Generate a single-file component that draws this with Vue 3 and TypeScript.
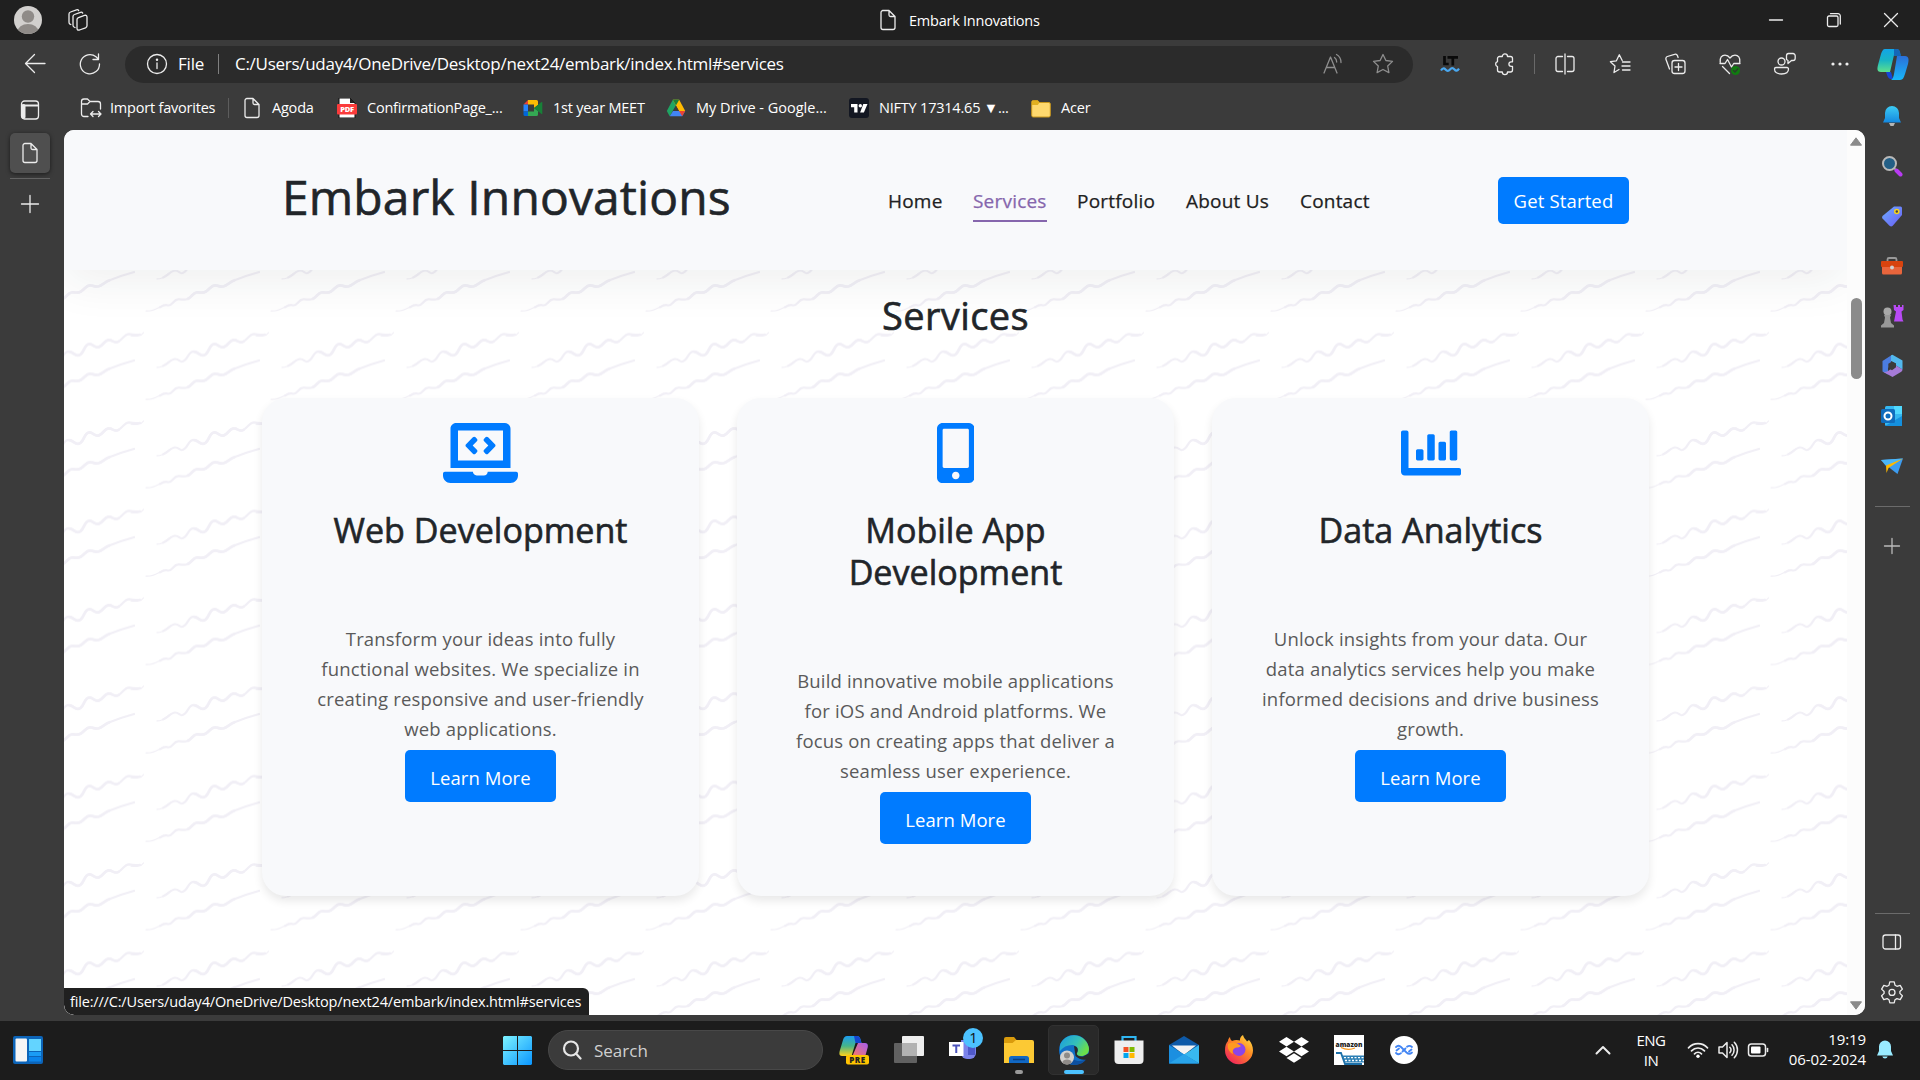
<script setup lang="ts">
interface Card {
  icon: string
  box: string
  width: number
  title: string
  lines: string[]
}

const cards: Card[] = [
  {
    icon: 'M255.03 261.65c6.25 6.25 16.38 6.25 22.63 0l11.31-11.31c6.25-6.25 6.25-16.38 0-22.63L253.25 192l35.71-35.72c6.25-6.25 6.25-16.38 0-22.63l-11.31-11.31c-6.25-6.25-16.38-6.25-22.63 0l-58.34 58.34c-6.25 6.25-6.25 16.38 0 22.63l58.35 58.34zm96.01-11.3l11.31 11.31c6.25 6.25 16.38 6.25 22.63 0l58.34-58.34c6.25-6.25 6.25-16.38 0-22.63l-58.34-58.34c-6.25-6.25-16.38-6.25-22.63 0l-11.31 11.31c-6.25 6.25-6.25 16.38 0 22.63L386.75 192l-35.71 35.72c-6.25 6.25-6.25 16.38 0 22.63zM624 416H381.54c-.74 19.81-14.71 32-32.74 32H288c-18.69 0-33.02-17.47-32.77-32H16c-8.8 0-16 7.2-16 16v16c0 35.2 28.8 64 64 64h512c35.2 0 64-28.8 64-64v-16c0-8.8-7.2-16-16-16zM576 48c0-26.4-21.6-48-48-48H112C85.6 0 64 21.6 64 48v336h512V48zm-64 272H128V64h384v256z',
    box: '0 0 640 512',
    width: 75,
    title: 'Web Development',
    lines: ['Transform your ideas into fully', 'functional websites. We specialize in', 'creating responsive and user-friendly', 'web applications.'],
  },
  {
    icon: 'M272 0H48C21.5 0 0 21.5 0 48v416c0 26.5 21.5 48 48 48h224c26.5 0 48-21.5 48-48V48c0-26.5-21.5-48-48-48zM160 480c-17.7 0-32-14.3-32-32s14.3-32 32-32 32 14.3 32 32-14.3 32-32 32zm112-108c0 6.6-5.4 12-12 12H60c-6.6 0-12-5.4-12-12V60c0-6.6 5.4-12 12-12h200c6.6 0 12 5.4 12 12v312z',
    box: '0 0 320 512',
    width: 37.5,
    title: 'Mobile App\nDevelopment',
    lines: ['Build innovative mobile applications', 'for iOS and Android platforms. We', 'focus on creating apps that deliver a', 'seamless user experience.'],
  },
  {
    icon: 'M332.8 320h38.4c6.4 0 12.8-6.4 12.8-12.8V172.8c0-6.4-6.4-12.8-12.8-12.8h-38.4c-6.4 0-12.8 6.4-12.8 12.8v134.4c0 6.4 6.4 12.8 12.8 12.8zm96 0h38.4c6.4 0 12.8-6.4 12.8-12.8V76.8c0-6.4-6.4-12.8-12.8-12.8h-38.4c-6.4 0-12.8 6.4-12.8 12.8v230.4c0 6.4 6.4 12.8 12.8 12.8zm-288 0h38.4c6.4 0 12.8-6.4 12.8-12.8v-70.4c0-6.4-6.4-12.8-12.8-12.8h-38.4c-6.4 0-12.8 6.4-12.8 12.8v70.4c0 6.4 6.4 12.8 12.8 12.8zm96 0h38.4c6.4 0 12.8-6.4 12.8-12.8V108.8c0-6.4-6.4-12.8-12.8-12.8h-38.4c-6.4 0-12.8 6.4-12.8 12.8v198.4c0 6.4 6.4 12.8 12.8 12.8zM496 384H64V80c0-8.84-7.16-16-16-16H16C7.16 64 0 71.16 0 80v336c0 17.67 14.33 32 32 32h464c8.84 0 16-7.16 16-16v-32c0-8.84-7.16-16-16-16z',
    box: '0 0 512 512',
    width: 60,
    title: 'Data Analytics',
    lines: ['Unlock insights from your data. Our', 'data analytics services help you make', 'informed decisions and drive business', 'growth.'],
  },
]

const nav: { label: string; width: number; active?: boolean }[] = [
  { label: 'Home', width: 55 },
  { label: 'Services', width: 74, active: true },
  { label: 'Portfolio', width: 79 },
  { label: 'About Us', width: 84 },
  { label: 'Contact', width: 71 },
]
</script>

<template>
  <div class="window">
    <header class="titlebar">
      <svg class="avatar" width="28" height="28" viewBox="0 0 28 28"><defs><clipPath id="av"><circle cx="14" cy="14" r="14" /></clipPath></defs><g clip-path="url(#av)"><rect width="28" height="28" fill="#d2d0ce" /><circle cx="14" cy="10.5" r="6.2" fill="#8f8b88" /><ellipse cx="14" cy="26" rx="10.5" ry="8" fill="#8f8b88" /></g></svg>
      <svg class="spaces line" width="24" height="24" viewBox="0 0 24 24"><path d="M12.500 9.600l6-2.200q2.500-.7 2.500 1.800v8.600q0 1.400-1.500 2l-6 2.200q-2.500.7-2.500-1.800v-8.600q0-1.400 1.500-2z" /><path d="M9 19.500l-1-.5q-1-.6-1-1.800V8.500q0-1.500 1.500-2l6-2.200q1.500-.4 2.200.8M4.800 16.500l-.8-.4q-1-.6-1-1.800V6q0-1.500 1.500-2l6-2.200q1.500-.4 2.200.8" /></svg>
      <div class="title"><svg class="line" width="20" height="22" viewBox="0 0 20 22"><path d="M4.500 1.500h6.500L17 7.500V18.500a2 2 0 0 1-2 2H5a2 2 0 0 1-2-2V3.500a2 2 0 0 1 2-2zM11 1.500V6a1.500 1.500 0 0 0 1.500 1.500H17" /></svg><span>Embark Innovations</span></div>
      <div class="winbtns">
        <svg class="line" width="20" height="20" viewBox="0 0 20 20"><path d="M3.500 10h13" /></svg>
        <svg class="line" width="20" height="20" viewBox="0 0 20 20"><rect x="3.500" y="6" width="10.500" height="10.500" rx="1.500" /><path d="M6.500 3.700H14a2.300 2.300 0 0 1 2.300 2.300v8" /></svg>
        <svg class="line" width="20" height="20" viewBox="0 0 20 20"><path d="M3.500 3.500l13 13M16.500 3.500l-13 13" /></svg>
      </div>
    </header>

    <div class="toolbar">
      <svg class="line back" width="24" height="24" viewBox="0 0 24 24"><path d="M22 11.500H3M11.500 2.500l-9 9 9 9" /></svg>
      <svg class="line" width="24" height="24" viewBox="0 0 24 24"><path d="M21.500 12A9.600 9.600 0 1 1 18 4.800L20.300 7M20.500 2v5.500H15" /></svg>
      <div class="pill">
        <svg class="line" width="22" height="22" viewBox="0 0 22 22"><circle cx="11" cy="11" r="9.500" /><path d="M11 10v5.500" /><circle cx="11" cy="6.800" r=".6" /></svg>
        <span class="scheme">File</span><i class="bar"></i>
        <span class="url">C:/Users/uday4/OneDrive/Desktop/next24/embark/index.html#services</span>
        <div class="pill-end">
          <svg class="line dim" width="22" height="22" viewBox="0 0 22 22"><path d="M2 20L8.500 4 15 20M4.300 14.500h8.400M12.500 4.500c1.500 1 2.200 2.600 2.200 4.500M14.500 1.500c3 1.600 4.500 4.500 4.500 8" /></svg>
          <svg class="line dim" width="22" height="22" viewBox="0 0 22 22"><path d="M11 1.500l2.900 6 6.600.9-4.800 4.600 1.200 6.600L11 16.500l-5.900 3.100 1.200-6.600L1.500 8.400l6.600-.9z" /></svg>
        </div>
      </div>
      <div class="actions">
        <div class="act"><svg width="22" height="22" viewBox="0 0 22 22" fill="none"><path d="M5.500 3v8h4.200M8.500 4.300H19M13.800 4v8.500" stroke="#0a0a0a" stroke-width="2.700" /><path d="M2 17.500q2.200-3.600 4.500-1t4.500 0 4.500 0 4.500-.8" stroke="#4aa8f0" stroke-width="2.200" /></svg></div>
        <div class="act"><svg class="line" width="22" height="24" viewBox="0 0 22 24"><path d="M5.500 4.500h2.800a2.600 2.600 0 0 1 5.200 0h3a2 2 0 0 1 2 2v3.300h-1.300a2.300 2.300 0 0 0 0 4.600h1.300v3.600a2 2 0 0 1-2 2h-3a2.600 2.600 0 0 1-5.200 0H5.500a2 2 0 0 1-2-2v-3.400a2.600 2.600 0 0 1 0-5V6.500a2 2 0 0 1 2-2z" /></svg></div>
        <i class="bar"></i>
        <div class="act"><svg class="line" width="22" height="22" viewBox="0 0 22 22"><path d="M8.500 3.500H4a2 2 0 0 0-2 2v11a2 2 0 0 0 2 2h4.500M13.500 3.500H18a2 2 0 0 1 2 2v11a2 2 0 0 1-2 2h-4.500M11 1v20" /></svg></div>
        <div class="act"><svg class="line" width="22" height="22" viewBox="0 0 22 22"><path d="M13.200 7.500L10.300 1.800 7.400 7.800l-6 .9 4.600 4.300-1 6.500 5-3M13.500 9H21M13 13h8M13.500 17H21" /></svg></div>
        <div class="act"><svg class="line" width="22" height="22" viewBox="0 0 22 22"><rect x="8" y="7.500" width="13" height="13" rx="2.500" /><path d="M14.500 10.500v7M11 14h7M5.500 16L2 6.500a2.300 2.300 0 0 1 1.400-3L10.500 1.300a2.300 2.300 0 0 1 3 1.400l.6 1.800" /></svg></div>
        <div class="act"><svg class="line" width="22" height="22" viewBox="0 0 22 22"><path d="M1.200 9.500C.5 4.500 3 2.200 6 2.200c2 0 3.700 1 5 2.800 1.300-1.800 3-2.800 5-2.800 3 0 5.500 2.300 4.800 7.300M1 10.500h5l2.500-4 4 7.500 2.200-3.500H21M3.500 13.500l7 7" /><circle cx="16.500" cy="17.500" r="4.500" fill="#107c10" stroke="none" /><path d="M14.500 17.500l1.500 1.500 2.700-3" stroke="#2b3b2b" /></svg></div>
        <div class="act"><svg class="line" width="24" height="24" viewBox="0 0 24 24"><circle cx="8.500" cy="9.500" r="3.500" /><path d="M3 15.500h11a1.500 1.500 0 0 1 1.500 1.500c0 3.500-3 5-7 5s-7-1.500-7-5A1.500 1.500 0 0 1 3 15.500zM15.500 1.500H20a2.200 2.200 0 0 1 2.200 2.200v2.600A2.200 2.200 0 0 1 20 8.500h-1.500L15 11.500V8.500l-1.500-1V3.700a2.200 2.200 0 0 1 2-2.200z" /></svg></div>
        <div class="act"><svg width="22" height="22" viewBox="0 0 22 22" fill="#eee"><circle cx="4" cy="11" r="1.600" /><circle cx="11" cy="11" r="1.600" /><circle cx="18" cy="11" r="1.600" /></svg></div>
        <div class="act last"><svg width="32" height="32" viewBox="0 0 32 32"><defs><linearGradient id="cpa" x1="0" y1="0" x2="0" y2="1"><stop offset="0" stop-color="#12a5e8" /><stop offset=".5" stop-color="#19b5c4" /><stop offset="1" stop-color="#5ee08c" /></linearGradient><linearGradient id="cpb" x1="0" y1="0" x2="0" y2="1"><stop offset="0" stop-color="#2b6fd8" /><stop offset="1" stop-color="#18b8fa" /></linearGradient></defs><path d="M8 1h11c3 0 3.500 2 4.500 6H17L13 24H4c-4 0-4-3-3-7l3-11c1-3 2-5 4-5z" fill="url(#cpa)" /><path d="M17 1h3c3 0 3 3 4 7h-7z" fill="#1467b8" /><path d="M9 24h5l2 7h-2c-3 0-3.500-3-5-7z" fill="#1546d6" /><path d="M20 8h8c4 0 4 4 3 8l-3 10c-1 3-2 6-5 6h-9c2-1 2.500-4 3-6z" fill="url(#cpb)" /></svg></div>
      </div>
    </div>

    <div class="body">
      <aside class="rail-left">
        <svg class="line tabs" width="22" height="22" viewBox="0 0 22 22"><rect x="2.500" y="2" width="17" height="18" rx="3" /><path d="M3 6.500h16" stroke-width="2" /><path d="M4.500 7v11" stroke-width="4" /></svg>
        <div class="tab"><svg class="line" width="20" height="22" viewBox="0 0 20 22"><path d="M5 1.500h6L17 7.500V18.500a2 2 0 0 1-2 2H5a2 2 0 0 1-2-2V3.500a2 2 0 0 1 2-2zM11 1.500V6a1.500 1.500 0 0 0 1.500 1.500H17" /></svg></div>
        <i class="rule"></i>
        <svg class="line" width="20" height="20" viewBox="0 0 20 20"><path d="M10 1.500v17M1.500 10h17" /></svg>
      </aside>

      <main class="center">
        <nav class="bookmarks">
          <div class="bm b0"><svg class="line" width="22" height="22" viewBox="0 0 22 22"><path d="M8 19.500H4a2.500 2.500 0 0 1-2.500-2.500V4.500A2.500 2.500 0 0 1 4 2h3.500L10 4.500h8A2.500 2.500 0 0 1 20.500 7v5M1.500 7H7.500L10 4.500M10.500 17h10M13 14.500L10.500 17l2.500 2.500M18.500 14.500L21 17l-2.500 2.500" /></svg><span>Import favorites</span></div>
          <i class="sep"></i>
          <div class="bm b1"><svg class="line" width="20" height="22" viewBox="0 0 20 22"><path d="M5 1.500h6L17 7.500V18.500a2 2 0 0 1-2 2H5a2 2 0 0 1-2-2V3.500a2 2 0 0 1 2-2zM11 1.500V6a1.500 1.500 0 0 0 1.500 1.500H17" /></svg><span>Agoda</span></div>
          <div class="bm b2"><svg width="20" height="20" viewBox="0 0 20 20"><path d="M2 0h11l5 5v15H2z" fill="#fff" stroke="#111" /><path d="M13 0v5h5z" fill="#222" /><rect x="0" y="6" width="20" height="10.500" rx="1" fill="#fb3b3b" /><text x="10" y="14" text-anchor="middle" fill="#fff" font-family="Open Sans" font-weight="800" font-size="7.500">PDF</text></svg><span>ConfirmationPage_...</span></div>
          <div class="bm b3"><svg width="20" height="18" viewBox="0 0 20 18"><path d="M5 1h8.500A1.500 1.500 0 0 1 15 2.500V6l-4 3V5.500H5z" fill="#fbbc04" /><path d="M5 1v4.500H.5z" fill="#ea4335" /><path d="M.5 5.500H5v7H.5z" fill="#2684fc" /><path d="M.5 12.500H5V17H2A1.500 1.500 0 0 1 .5 15.500z" fill="#0066da" /><path d="M5 12.500h6V9l4 3v3.500a1.500 1.500 0 0 1-1.500 1.500H5z" fill="#34a853" /><path d="M11 9l7.500-6q.8-.4.800.5v11q0 1-.8.500z" fill="#188038" /></svg><span>1st year MEET</span></div>
          <div class="bm b4"><svg width="20" height="18" viewBox="0 0 20 18"><path d="M6.800.8h6.400L7 11.600 3.700 17.200.8 12z" fill="#1fa463" /><path d="M6.800.8h6.400l6 11.200h-6.300z" fill="#ffba00" /><path d="M6.800.8h6.400L10 6.500z" fill="#188038" /><path d="M7 12h12.200l-3 5.200H3.700z" fill="#4285f4" /><path d="M13 12h6.200l-3 5.200z" fill="#ea4335" /><path d="M10 6.700L13 12H7z" fill="#3b3b3b" /></svg><span class="wide">My Drive - Google...</span></div>
          <div class="bm b5"><svg width="20" height="20" viewBox="0 0 20 20"><rect width="20" height="20" rx="3" fill="#131722" /><path d="M2 6h6.500v8.500H5.200V9.300H2zM14.300 6h4.200l-3.600 8.500h-3.800z" fill="#fff" /><circle cx="11.300" cy="7.700" r="1.700" fill="#fff" /></svg><span>NIFTY 17314.65 ▼...</span></div>
          <div class="bm b6"><svg width="20" height="19" viewBox="0 0 20 19"><path d="M.7 3A1.500 1.500 0 0 1 2.200 1.500h4.500L8.500 3.500H18A1.500 1.500 0 0 1 19.300 5v11.500A1.500 1.500 0 0 1 18 18H2.200A1.500 1.500 0 0 1 .7 16.500z" fill="#ffd96e" stroke="#c9971c" /><path d="M1 3a1.500 1.500 0 0 1 1.200-1.300h4.500L8.500 3.500 6.800 6H1z" fill="#e2b020" /></svg><span>Acer</span></div>
        </nav>

        <section class="viewport">
          <div class="page">
            <svg class="waves" width="1783" height="885">
              <defs>
                <pattern id="wave" width="125" height="88.390" patternUnits="userSpaceOnUse" x="81" y="201.700">
                  <g fill="none" stroke="#f1eff6" stroke-linecap="round" stroke-linejoin="round">
                    <path stroke-width="1.200" d="M12 35.700c8 .5 10-7.500 18-8.400M111 4c5 .5 10 1 12.500-3M1 67.700c8 .7 11-3 18-6" />
                    <path stroke-width="2.200" d="M18 34.300c5-2 8-7 12-7 5 0 5 5 9.500 1.500 4-3 4-9 9.500-9 5 0 6.500 6.500 11.500 3 4-3 4-10.500 9-10.500 4 0 5 4.500 9.500 3 4-1.500 5.500-7 10-7 4 0 5 4 9.500 1.500 4-2 6-7.500 10.500-7.500q6 1.200 11 .5M15 64c3-2 5-3 8-2 4 1 5-5.500 10-6 4-.5 6 1.500 10-.5 4-2 5-6 9-6.500 4-.3 5 1.500 9-.8 4-2.300 5-6.200 9-6.200 4 0 5 2.500 9 1 4-1.700 6-4.500 10.500-6q11-4.500 24.500-8.200" />
                    <path stroke-width="2.800" d="M49.500 20.300c4.500 0 6 6 11 2.500 4-3 4-10.500 9-10.500 4 0 5 4.500 9.500 3 4-1.500 5.500-7 10-7 4 0 5 4 9.500 1.500M43 55.500c4-2 5-6 9-6.500 4-.3 5 1.500 9-.8 4-2.300 5-6.200 9-6.200 4 0 5 2.500 9 1 4-1.700 6-4.500 10.500-6" />
                  </g>
                </pattern>
              </defs>
              <rect width="1783" height="885" fill="url(#wave)" />
            </svg>
            <header class="site-head">
              <h1>Embark Innovations</h1>
              <nav class="links">
                <a v-for="n in nav" :key="n.label" :class="{ active: n.active }" :style="{ width: n.width + 'px' }">{{ n.label }}</a>
              </nav>
              <a class="cta">Get Started</a>
            </header>
            <h2>Services</h2>
            <div class="cards">
              <article v-for="c in cards" :key="c.title" class="card">
                <svg :width="c.width" height="60" :viewBox="c.box" fill="#007bff"><path :d="c.icon" /></svg>
                <h3>{{ c.title }}</h3>
                <p><span v-for="l in c.lines" :key="l">{{ l }}</span></p>
                <a class="more">Learn More</a>
              </article>
            </div>
          </div>
          <div class="scroll">
            <svg width="12" height="9" viewBox="0 0 12 9"><path d="M6 .8L11.500 8.200H.5z" fill="#8b8b8b" stroke="#8b8b8b" stroke-linejoin="round" /></svg>
            <i class="thumb"></i>
            <svg class="down" width="12" height="9" viewBox="0 0 12 9"><path d="M6 8.200L11.500.8H.5z" fill="#8b8b8b" stroke="#8b8b8b" stroke-linejoin="round" /></svg>
          </div>
          <div class="status"><span>file:///C:/Users/uday4/OneDrive/Desktop/next24/embark/index.html#services</span></div>
        </section>
      </main>

      <aside class="rail-right">
        <div class="ri"><svg width="22" height="22" viewBox="0 0 22 22"><defs><linearGradient id="bl" x1="0" y1="0" x2="0" y2="1"><stop offset="0" stop-color="#3ccbf4" /><stop offset="1" stop-color="#1488e0" /></linearGradient></defs><path d="M8 18h6l-1.500 3h-3z" fill="#b5b5b5" /><path d="M11 1a7 7 0 0 1 7 7v5l2 4.500H2L4 13V8a7 7 0 0 1 7-7z" fill="url(#bl)" /></svg></div>
        <div class="ri"><svg width="22" height="22" viewBox="0 0 22 22"><path d="M12.500 12.500l3 3" stroke="#999" stroke-width="2" /><path d="M15.500 15.500l4 4" stroke="#b83af3" stroke-width="4" stroke-linecap="round" /><circle cx="8.500" cy="8.500" r="6.500" fill="#235f86" stroke="#b9b9b9" stroke-width="2" /></svg></div>
        <div class="ri"><svg width="22" height="22" viewBox="0 0 22 22"><defs><linearGradient id="tg" x1="0" y1="0" x2="1" y2="1"><stop offset="0" stop-color="#6dadff" /><stop offset="1" stop-color="#6a5df5" /></linearGradient></defs><path d="M13 1.500h6.500A1.500 1.500 0 0 1 21 3v7l-9.500 11q-1.500 1-3-.3L1.500 13.500q-1-1.200 0-2.500z" fill="url(#tg)" /><circle cx="15.800" cy="6.500" r="2.800" fill="#f6d31c" /><circle cx="15.800" cy="6.500" r="1.200" fill="#444" /></svg></div>
        <div class="ri"><svg width="24" height="20" viewBox="0 0 24 20"><path d="M7.500 5V3.500A1.500 1.500 0 0 1 9 2h6a1.500 1.500 0 0 1 1.500 1.500V5" fill="none" stroke="#999" stroke-width="1.800" /><rect x="2" y="9" width="20" height="9.500" rx="1.500" fill="#e8653c" /><rect x="1" y="5" width="22" height="6" rx="1" fill="#d8430e" /><circle cx="12" cy="11.500" r="2" fill="#d0d0d0" /></svg></div>
        <div class="ri"><svg width="24" height="24" viewBox="0 0 24 24"><path d="M13.500 1h2.500v2h2V1h2v2h2V1h1.500v5l-2 1.500 1 8 1 2h-9.500l2-10-2-1.500z" fill="#b84af5" /><circle cx="7.500" cy="7.500" r="4" fill="#a8a8a8" /><path d="M4 11h7l-1 2.500 1 5.500 3 2.500V23.500H1V21.500L4 19l1-5.500z" fill="#989898" /></svg></div>
        <div class="ri"><svg width="24" height="24" viewBox="0 0 24 24"><path d="M11 1.500v10L8 14v6.500l-5.500-3V7z" fill="#4b7de0" /><path d="M11 1.200l1.500-.4L22.500 6.500V15.500L16 11.500V9.500l-5-2.500z" fill="#52b8ee" /><path d="M22.500 15.500q0 1.500-1.200 2.200L12.500 23 3 17.800q3 .5 5-.8l8-5.500z" fill="#a67bd8" /><path d="M12 7.500l4 2.300v3.500L12 16.200 8.300 14.300V9.800z" fill="#3b3b3b" /></svg></div>
        <div class="ri"><svg width="24" height="24" viewBox="0 0 24 24"><rect x="5" y="2" width="17" height="20" rx="1.500" fill="#35b8f1" /><path d="M14 2h8v8h-8z" fill="#50d9ff" /><path d="M5 22l17-10v10z" fill="#1490df" /><rect x="1" y="5" width="14" height="14" rx="1.500" fill="#0f6cbd" /><circle cx="8" cy="12" r="3.500" fill="none" stroke="#fff" stroke-width="2" /></svg></div>
        <div class="ri"><svg width="24" height="20" viewBox="0 0 24 20"><path d="M1 4L23 2.500 17.500 18 11 13z" fill="#3d9cf0" /><path d="M1 4L23 2.500 6 10z" fill="#4bb6f8" /><path d="M6 9.500L23 2.500 8.500 12 6.500 17z" fill="#ffb900" /></svg></div>
        <i class="rr"></i>
        <svg class="line plus" width="20" height="20" viewBox="0 0 20 20"><path d="M10 2.500v15M2.500 10h15" stroke="#bbb" /></svg>
        <i class="rr push"></i>
        <svg class="line panel" width="22" height="20" viewBox="0 0 22 20"><rect x="2" y="3" width="17.500" height="14" rx="2.500" /><path d="M14.500 3v14" /></svg>
        <svg class="line gear" width="24" height="24" viewBox="0 0 24 24"><path d="M9.800 1.800h4.400l.8 3.400 1.900 1.100 3.300-1 2.200 3.800-2.500 2.400v1.900l2.500 2.400-2.200 3.800-3.300-1-1.900 1.100-.8 3.200H9.800L9 19.700l-1.900-1.100-3.300 1-2.200-3.800 2.500-2.400v-1.900L1.600 9.100l2.200-3.800 3.300 1L9 5.200z" /><circle cx="12" cy="12.400" r="3" /></svg>
      </aside>
    </div>

    <footer class="taskbar">
      <svg class="widgets" width="30" height="28" viewBox="0 0 30 28"><rect width="30" height="28" rx="2" fill="#0c64b8" /><rect x="2.500" y="2.500" width="11.500" height="23" rx="1" fill="#f5f5f5" /><rect x="16" y="3" width="12" height="12" fill="#63d4ff" /><rect x="16" y="16" width="12" height="4" fill="#1a9cf5" /><rect x="16" y="21" width="12" height="4.500" fill="#0b84ea" /></svg>
      <svg class="start" width="29" height="29" viewBox="0 0 29 29"><defs><linearGradient id="ws" x1="0" y1="0" x2="29" y2="29" gradientUnits="userSpaceOnUse"><stop offset="0" stop-color="#7df3ff" /><stop offset="1" stop-color="#0a96ff" /></linearGradient></defs><path d="M1 0h13v14H0V1zM15 0h13l1 1v13H15zM0 15h14v14H1l-1-1zM15 15h14v13l-1 1H15z" fill="url(#ws)" /></svg>
      <div class="search"><svg width="20" height="20" viewBox="0 0 20 20" fill="none" stroke="#e6e6e6" stroke-width="2.200"><circle cx="9" cy="8.500" r="7" /><path d="M14 13.500l4.500 5" stroke-linecap="round" /></svg><span>Search</span></div>
      <div class="apps">
        <div class="app"><svg width="30" height="30" viewBox="0 0 30 30"><defs><linearGradient id="pa" x1="0" y1="0" x2="0" y2="1"><stop offset="0" stop-color="#1c9cf0" /><stop offset=".5" stop-color="#45b58a" /><stop offset="1" stop-color="#ffd21a" /></linearGradient><linearGradient id="pb" x1="1" y1="0" x2="0" y2="1"><stop offset="0" stop-color="#a55cf0" /><stop offset="1" stop-color="#ff7a5a" /></linearGradient></defs><path d="M8 1h10c3 0 3.500 3 4.500 7h-6l-4 13H3c-3 0-3-3-2-6L4 5c1-3 2-4 4-4z" fill="url(#pa)" /><path d="M15 1h3c3 0 3.500 3 4.500 7h-6z" fill="#1446d0" /><path d="M19 8h7c4 0 3 4 2 7l-2 7H13z" fill="url(#pb)" /><rect x="7" y="20" width="23" height="9.500" rx="2" fill="#ffc400" /><text x="18.500" y="27.600" text-anchor="middle" font-family="Open Sans" font-weight="800" font-size="8" letter-spacing=".6" fill="#222">PRE</text></svg></div>
        <div class="app"><svg width="32" height="30" viewBox="0 0 32 30"><rect x="1" y="8" width="23" height="20" rx="1" fill="#616161" /><rect x="9" y="1" width="22" height="20" rx="1" fill="#eeeeee" /><path d="M9 8h15v13H9z" fill="#b2b2b2" /></svg></div>
        <div class="app"><svg class="teams" width="36" height="36" viewBox="0 0 36 36"><path d="M13 12h15v13a6 6 0 0 1-6 6h-3a6 6 0 0 1-6-6z" fill="#7b83eb" /><path d="M20 10h7v17h-7z" fill="#5059c9" /><rect x="1" y="14" width="14.500" height="14" fill="#fff" /><path d="M4.500 17.500h7.500M8.250 17v8" stroke="#4b53bc" stroke-width="2" /><circle cx="25" cy="10" r="10" fill="#4cc2ff" /><text x="25.300" y="15.300" text-anchor="middle" font-family="Open Sans" font-size="14.500" fill="#111">1</text></svg></div>
        <div class="app"><svg width="30" height="28" viewBox="0 0 30 28"><path d="M0 3a2 2 0 0 1 2-2h8l3 3.500L9 9H0z" fill="#d99b0c" /><path d="M0 7h8.500L12 4h16a2 2 0 0 1 2 2v21H0z" fill="#fcc934" /><path d="M5 27v-4.500A2.500 2.500 0 0 1 7.500 20h15a2.500 2.500 0 0 1 2.500 2.500V27z" fill="#1168c4" /><path d="M9 23.500h12" stroke="#0a3f80" stroke-width="1.500" /></svg><i class="dot"></i></div>
        <div class="app on"><svg width="30" height="30" viewBox="0 0 30 30"><defs><linearGradient id="eg" x1="0" y1="0" x2="1" y2=".5"><stop offset="0" stop-color="#1a9be0" /><stop offset=".6" stop-color="#35c1b8" /><stop offset="1" stop-color="#6be04a" /></linearGradient></defs><circle cx="15" cy="15" r="15" fill="#1170c8" /><path d="M1 10A15 15 0 0 1 30 14c0 5-4 7-8 7-3.500 0-5-2-4-3.500 2-3 0-7.500-5-7.500-5 0-9 2-12 6z" fill="url(#eg)" /><path d="M11 16c-2 5 3 10 9 10 3 0 5-.8 7.500-2.200C24 30 16 31 11 29 7 26 8 19 11 16z" fill="#0d4f9e" /><path d="M15 11c5 1 4 5 3 7-1 2 2 4 6 3.500l5.500-3 2 0-2.500 6.500-1.500-.5c-4 1-8-.5-11-3.500z" fill="#292929" /><circle cx="8" cy="22.500" r="7" fill="#d2d0ce" /><circle cx="8" cy="20.500" r="3" fill="#8f8b88" /><path d="M3.200 27.500a5 4 0 0 1 9.600 0A7 7 0 0 1 3.200 27.500z" fill="#8f8b88" /></svg><i class="line-on"></i></div>
        <div class="app"><svg width="30" height="30" viewBox="0 0 30 30"><path d="M8.500 6V2h13v4" fill="none" stroke="#2fb6f2" stroke-width="2.200" /><path d="M.5 5.500h29V25a4 4 0 0 1-4 4h-21a4 4 0 0 1-4-4z" fill="#eeeeee" /><path d="M9.500 12h5v5h-5z" fill="#f25022" /><path d="M15.500 12h5v5h-5z" fill="#7fba00" /><path d="M9.500 18h5v5h-5z" fill="#00a4ef" /><path d="M15.500 18h5v5h-5z" fill="#ffb900" /></svg></div>
        <div class="app"><svg width="30" height="28" viewBox="0 0 30 28"><path d="M0 9L15 0l15 9-2 5H2z" fill="#0e5aa8" /><path d="M3 9.500h24L15 19z" fill="#f3f3f3" /><path d="M0 9l30 18.500H0z" fill="#1b8fe0" /><path d="M30 9v18.500L15 18.500z" fill="#38b8f0" /><path d="M0 27.500L15 18l15 9.500z" fill="#29a4ea" /></svg></div>
        <div class="app"><svg width="30" height="30" viewBox="0 0 30 30"><defs><linearGradient id="ff" x1="1" y1="0" x2=".2" y2="1"><stop offset="0" stop-color="#fff04a" /><stop offset=".45" stop-color="#ff8a24" /><stop offset="1" stop-color="#f0205e" /></linearGradient></defs><path d="M4 6c0-2 1-3 2-4 0 2 1 3 2 4 3-1.500 6-1 8-.5C15.500 3.500 17 1 19 0c.5 3 3 4.500 4 6.500L25 5c2.500 3 4 6 4 10.500A14 14 0 0 1 1 15c0-4 1-7 3-9z" fill="url(#ff)" /><circle cx="15" cy="14.500" r="6.500" fill="#8b45e8" /><path d="M4 9c3-2 7-2 10 0l3 2c-2 2-4 1-6 2s-3 3-2 6c-4-2-6-6-5-10z" fill="#ff9a1f" /></svg></div>
        <div class="app"><svg width="30" height="26" viewBox="0 0 30 26" fill="#fff"><path d="M7.500 0L15 4.800 7.500 9.600 0 4.800zM22.500 0L30 4.800 22.500 9.600 15 4.800zM7.500 9.700L15 14.500 7.500 19.300 0 14.500zM22.500 9.700L30 14.500 22.500 19.300 15 14.500zM15 16.200l7.500 4.700L15 25.700 7.500 20.900z" /></svg></div>
        <div class="app"><svg width="30" height="30" viewBox="0 0 30 30"><rect width="30" height="30" fill="#fff" /><text x="15" y="11.500" text-anchor="middle" font-family="Open Sans" font-weight="800" font-size="7.300" textLength="27" lengthAdjust="spacingAndGlyphs" fill="#222">amazon</text><path d="M7 12.500q7 3.500 14 .5" fill="none" stroke="#f7981d" stroke-width="1.300" /><path d="M2 18h5l4 11h17" fill="none" stroke="#1b6fa8" stroke-width="1.800" /><path d="M8 20.500h22v7H11z" fill="#2b7fb5" /><path d="M10 22.700h20M11 25.500h19" stroke="#fff" stroke-width="1.300" stroke-dasharray="2 1.500" /></svg></div>
        <div class="app"><svg width="30" height="30" viewBox="0 0 30 30" fill="none" stroke="#4285f4" stroke-width="1.800" stroke-linecap="round"><circle cx="15" cy="15" r="14" fill="#fff" stroke="none" /><path d="M7 12q2.500-2.500 5 0l5.500 5.500q2.800 2.500 5.500 0M7 18q2.500 2.500 5 .2M18 11.800q2.500-2 5 .2M7.500 15.500L10 13.500M20 16.500l2.500-2M13.500 16.500l3-3" /></svg></div>
      </div>
      <div class="tray">
        <svg class="line chev" width="18" height="12" viewBox="0 0 18 12"><path d="M2.500 9.500L9 3l6.500 6.500" stroke-width="2" /></svg>
        <div class="lang"><span>ENG</span><span>IN</span></div>
        <svg class="line wifi" width="22" height="18" viewBox="0 0 22 18"><path d="M1.500 6.800a13 13 0 0 1 19 0M4.500 9.800a9 9 0 0 1 13 0M7.500 12.800a5 5 0 0 1 7 0" stroke-width="1.700" /><circle cx="11" cy="15.300" r="1.700" fill="#fff" stroke="none" /></svg>
        <svg class="line spk" width="22" height="20" viewBox="0 0 22 20"><path d="M2 7h3.500l4.500-4.500v15L5.500 13H2zM12.800 7.300a4 4 0 0 1 0 5.400M15 4.800a7.500 7.500 0 0 1 0 10.400M17.300 2.300a11 11 0 0 1 0 15.400" stroke-width="1.500" /></svg>
        <svg class="line bat" width="22" height="16" viewBox="0 0 22 16"><rect x="1.500" y="2" width="17" height="12" rx="2.800" stroke-width="1.500" /><rect x="4" y="4.500" width="9.500" height="7" rx="1" fill="#fff" stroke="none" /><path d="M20.500 6.500v3" stroke-width="1.600" /></svg>
        <div class="clock"><span>19:19</span><span class="date">06-02-2024</span></div>
        <svg class="bell" width="18" height="20" viewBox="0 0 18 20"><path d="M9 .5a6 6 0 0 1 6 6v4.500l2 4.500H1L3 11V6.500a6 6 0 0 1 6-6zM6.300 16.500h5.400a2.800 2.800 0 0 1-5.400 0z" fill="#99ebff" /></svg>
      </div>
    </footer>
  </div>
</template>

<style>
body { background: #3b3b3b; overflow: hidden; }
</style>

<style scoped>
* { box-sizing: border-box; }
svg { display: block; flex: none; }
span { white-space: nowrap; }
.window { width: 1920px; height: 1080px; display: flex; flex-direction: column; background: #3b3b3b; color: #fff; font-family: "Open Sans", "Noto Sans", sans-serif; font-size: 14.500px; overflow: hidden; }
.line { fill: none; stroke: #ececec; stroke-width: 1.300; stroke-linecap: round; stroke-linejoin: round; }
.line.dim { stroke: #8e8e8e; }

.titlebar { height: 40px; flex: none; background: #202020; display: flex; align-items: center; padding-left: 14px; }
.spaces { margin-left: 24px; }
.title { margin-left: 788px; display: flex; align-items: center; gap: 11px; width: 180px; letter-spacing: -.240px; }
.winbtns { margin-left: auto; display: flex; gap: 37.500px; padding-right: 19px; }

.toolbar { height: 48px; flex: none; display: flex; align-items: center; }
.toolbar > .back { margin: 0 31px 0 23px; }
.pill { margin-left: 23px; width: 1288px; height: 37px; border-radius: 19px; background: #2b2b2b; display: flex; align-items: center; padding: 0 19px 0 21px; font-size: 17px; }
.pill span { padding-bottom: 2px; }
.scheme { margin-left: 10px; width: 27px; letter-spacing: -.200px; }
.bar { width: 1px; height: 20px; background: #808080; flex: none; }
.pill .bar { margin: 0 16px 0 13px; }
.url { letter-spacing: -.280px; }
.pill-end { margin-left: auto; display: flex; gap: 28px; }
.actions { margin-left: 9px; display: flex; align-items: center; }
.act { width: 55px; display: flex; justify-content: center; }
.act.last { width: 52px; }
.actions .bar { margin: 0 2px; background: #696969; }

.body { flex: 1; display: flex; min-height: 0; }
.rail-left { width: 64px; padding-right: 5px; display: flex; flex-direction: column; align-items: center; }
.tabs { margin-top: 11px; }
.tab { margin-top: 12px; width: 40px; height: 40px; border-radius: 5px; background: #4f4f4f; box-shadow: 0 1px 4px rgba(0,0,0,.550); display: flex; align-items: center; justify-content: center; }
.rule { width: 40px; height: 1px; background: #636363; margin: 5px 0 15px; }
.center { width: 1801px; display: flex; flex-direction: column; }
.bookmarks { height: 42px; flex: none; display: flex; align-items: center; padding-left: 16px; padding-bottom: 2px; }
.bm { display: flex; align-items: center; flex: none; gap: 10px; letter-spacing: -.210px; }
.bm span { padding-bottom: 2px; }
.bm .wide { letter-spacing: 0; }
.b0 { width: 148px; gap: 8px; }
.sep { width: 1px; height: 20px; background: #5d5d5d; margin-right: 13px; }
.b1 { width: 95px; }
.b2 { width: 186px; }
.b3 { width: 143px; }
.b4 { width: 183px; }
.b5 { width: 182px; }

.viewport { position: relative; height: 885px; background: #fff; border-radius: 10px; overflow: hidden; display: flex; color: #212529; }
.page { position: relative; width: 1783px; overflow: hidden; display: flex; flex-direction: column; align-items: center; }
.waves { position: absolute; left: 0; top: 0; }
.site-head { position: relative; width: 100%; height: 140px; flex: none; background: #f8f9fb; box-shadow: 0 12px 46px rgba(33,37,41,.070); display: flex; align-items: center; padding-left: 218px; }
h1, h2, h3 { -webkit-text-stroke: .600px #212529; }
h1 { margin: 0 0 7px; width: 606px; font-size: 48px; font-weight: 500; letter-spacing: .120px; line-height: 60px; white-space: nowrap; }
.links { display: flex; gap: 30px; font-size: 19px; font-weight: 500; letter-spacing: .200px; padding-top: 4px; -webkit-text-stroke: .250px; }
.links a { height: 39px; line-height: 37px; white-space: nowrap; border-bottom: 2px solid transparent; color: #212121; }
.links a.active { color: #8666ad; border-color: #8666ad; }
.cta { margin-left: 127px; width: 131px; height: 47px; border-radius: 5px; background: #007bff; color: #fff; font-size: 18.500px; letter-spacing: .150px; line-height: 48px; text-align: center; white-space: nowrap; }
h2 { position: relative; margin: 20px 0 0; font-size: 38px; font-weight: 500; letter-spacing: .400px; line-height: 50px; }
.cards { position: relative; margin-top: 58px; display: flex; gap: 38px; align-self: flex-start; padding-left: 198px; }
.card { width: 437px; height: 498px; border-radius: 24px; background: #f8f9fb; box-shadow: 0 5px 10px rgba(0,0,0,.090); display: flex; flex-direction: column; align-items: center; padding-top: 24.500px; }
h3 { margin: 26.500px 0 0; font-size: 34.100px; font-weight: 500; line-height: 42px; text-align: center; white-space: pre-line; }
p { margin: 73px 0 0; font-size: 18.500px; letter-spacing: .170px; line-height: 30px; color: #5a5a5a; display: flex; flex-direction: column; align-items: center; }
.more { margin-top: 6px; width: 151px; height: 52px; border-radius: 5px; background: #007bff; color: #fff; font-size: 18.500px; letter-spacing: .050px; line-height: 55px; text-align: center; }
.scroll { width: 18px; background: #fcfcfc; display: flex; flex-direction: column; align-items: center; padding: 7px 0 5px; }
.thumb { width: 11px; height: 81px; border-radius: 6px; background: #8b8b8b; margin-top: 152px; }
.down { margin-top: auto; }
.status { position: absolute; left: 0; bottom: 0; width: 525px; height: 27px; background: #202020; color: #fff; border-radius: 0 6px 0 10px; line-height: 27px; padding-left: 6px; letter-spacing: -.170px; }

.rail-right { width: 55px; padding-right: 1px; display: flex; flex-direction: column; align-items: center; padding-top: 3px; }
.ri { height: 50px; display: flex; align-items: center; justify-content: center; }
.rr { width: 35px; height: 1px; background: #6b6b6b; margin-top: 15px; }
.plus { margin-top: 29px; }
.rr.push { margin-top: auto; }
.panel { margin-top: 18px; }
.gear { margin: 28px 0 17px; }

.taskbar { height: 59px; flex: none; background: #1c1c1c; display: flex; align-items: center; padding-left: 13px; padding-bottom: 1px; }
.start { margin-left: 460px; }
.search { margin-left: 16px; width: 275px; height: 40px; border-radius: 20px; background: #3b3b3b; border: 1px solid #484848; display: flex; align-items: center; padding-left: 13px; gap: 12px; font-size: 17px; color: #d0d0d0; }
.apps { display: flex; margin-left: 3px; }
.app { position: relative; width: 55px; height: 50px; display: flex; align-items: center; justify-content: center; }
.teams { margin: -8px 0 0 4px; }
.on::before { content: ""; position: absolute; inset: 0 2px; border-radius: 5px; background: #292929; border: 1px solid #313131; }
.on svg { position: relative; }
.dot, .line-on { position: absolute; bottom: 1px; height: 4px; border-radius: 2px; }
.dot { width: 8px; background: #9a9a9a; }
.line-on { width: 20px; background: #4cc2ff; }
.tray { margin-left: 163px; display: flex; align-items: center; font-size: 15px; line-height: 20px; }
.lang { width: 40px; margin-left: 19px; display: flex; flex-direction: column; align-items: center; letter-spacing: -.500px; padding-bottom: 1px; }
.wifi { margin-left: 16px; }
.spk { margin-left: 8px; }
.bat { margin-left: 8px; }
.clock { width: 90px; margin-left: 7px; display: flex; flex-direction: column; align-items: flex-end; letter-spacing: -.100px; padding-bottom: 2px; }
.bell { margin-left: 10px; }
</style>
